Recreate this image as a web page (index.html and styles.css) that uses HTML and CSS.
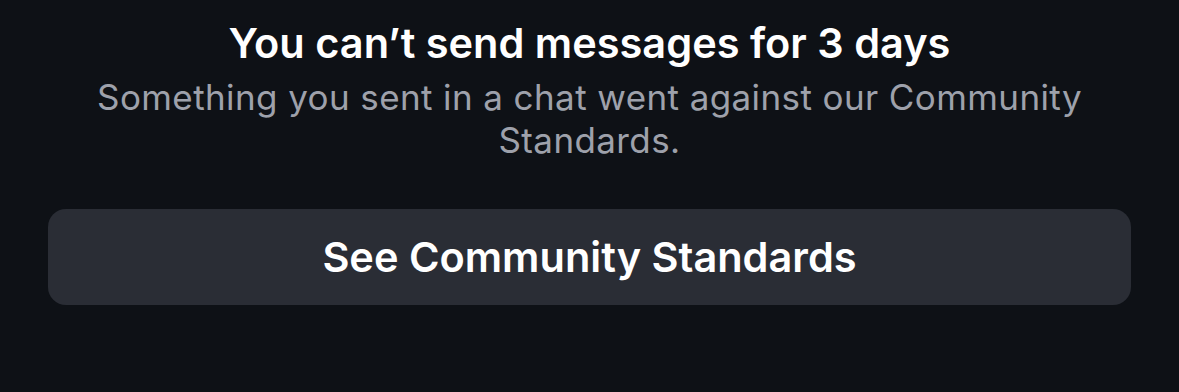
FILE: index.html
```html
<!DOCTYPE html>
<html>
<head>
<meta charset="utf-8">
<link rel="stylesheet" href="styles.css">
</head>
<body>
<div class="notice">
  <h1 class="title">You can’t send messages for 3 days</h1>
  <p class="desc">Something you sent in a chat went against our Community Standards.</p>
  <button class="action">See Community Standards</button>
</div>
</body>
</html>
```
FILE: styles.css
```css
html, body {
  margin: 0;
  padding: 0;
  background: #0e1116;
  width: 1179px;
  height: 392px;
  overflow: hidden;
}
.notice {
  display: flex;
  flex-direction: column;
  align-items: center;
  padding: 19px 48px 0;
  font-family: Inter, "Noto Sans", sans-serif;
}
.title {
  margin: 0;
  color: #ffffff;
  font-size: 41.5px;
  font-weight: 600;
  line-height: 48px;
  letter-spacing: 0;
}
.desc {
  margin: 9px 0 0;
  width: 1010px;
  text-align: center;
  color: #9ea1ab;
  font-size: 35px;
  font-weight: 400;
  line-height: 43px;
  letter-spacing: 0.4px;
}
.action {
  margin-top: 47px;
  width: 100%;
  height: 96px;
  border: none;
  border-radius: 18px;
  background: #2a2d35;
  color: #ffffff;
  font-family: Inter, "Noto Sans", sans-serif;
  font-size: 41.5px;
  font-weight: 600;
}
```
